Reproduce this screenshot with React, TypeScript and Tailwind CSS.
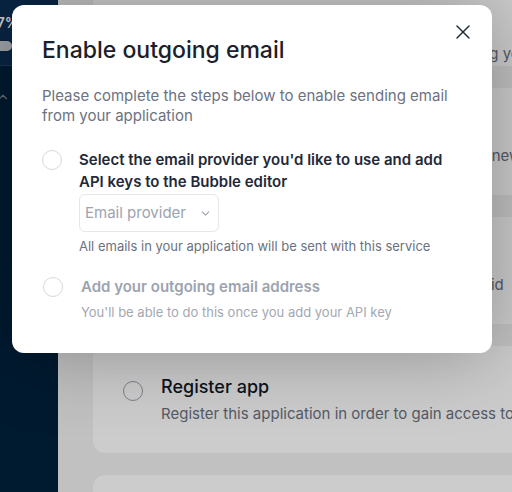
import { ChevronDown, ChevronUp, X } from "lucide-react";

type BgStep = {
  readonly title: string;
  readonly description: string;
};

const bgSteps: BgStep[] = [
  { title: "Create your account", description: "Set up the new workspace and start by building your app" },
  { title: "Choose a plan", description: "Pick a plan so your app can run under a brand new" },
  { title: "Connect a domain", description: "Point a custom domain to this app once it is paid" },
  { title: "Register app", description: "Register this application in order to gain access to" },
  { title: "Launch", description: "Go live" },
];

function BackgroundPage() {
  return (
    <div className="flex h-[492px] w-[512px] overflow-hidden bg-[#f2f2f2]">
      <aside className="flex w-[58px] shrink-0 flex-col bg-[#00213d]">
        <div className="flex h-[66px] flex-col gap-2 border-b border-white/10 bg-[#0b2f55] pt-3">
          <span className="-ml-3 text-[14px] font-semibold text-white">27%</span>
          <div className="-ml-3 h-[10px] w-[24px] rounded-full bg-[#c9ccd1]" />
        </div>
        <ChevronUp aria-hidden="true" size={14} className="-ml-1 mt-[24px] text-white/50" />
      </aside>
      <main className="flex flex-1 flex-col pl-[35px]">
        <div className="-mt-[42px] flex flex-col gap-[22px]">
          {bgSteps.map((step, i) => (
            <div
              key={step.title}
              className={`flex shrink-0 gap-[18px] rounded-xl bg-white px-[30px] w-[500px] ${i === 0 ? "h-[108px] pt-[56px]" : "h-[107px] pt-[28px]"}`}
            >
              <span className="mt-[7px] size-[20px] shrink-0 rounded-full border-[1.5px] border-[#9ca3af]" />
              <div className="flex flex-col">
                <p className="whitespace-nowrap text-[18px] font-medium leading-[26px] text-[#111827]">{step.title}</p>
                <p className="whitespace-nowrap text-[15px] leading-[27px] text-[#6b7280]">{step.description}</p>
              </div>
            </div>
          ))}
        </div>
      </main>
    </div>
  );
}

export default function App() {
  return (
    <div className="relative h-[492px] w-[512px] overflow-hidden font-['Inter',sans-serif]">
      <BackgroundPage />
      <div className="absolute inset-0 bg-black/20" />
      <section
        aria-label="Enable outgoing email"
        className="absolute left-[12px] top-[5px] w-[480px] rounded-xl bg-white px-[30px] pb-[32px] pt-[31px] shadow-[0_0_80px_rgba(0,0,0,0.3)]"
      >
        <button type="button" aria-label="Close" className="absolute right-[17px] top-[15px] text-[#1f2937]">
          <X aria-hidden="true" size={24} strokeWidth={1.4} />
        </button>
        <h2 className="text-[23px] font-medium leading-[28px] text-[#1a202c]">Enable outgoing email</h2>
        <p className="mt-[22px] text-[15px] leading-[20px] text-[#6b7280]">
          Please complete the steps below to enable sending email from your application
        </p>
        <div className="mt-[23px] flex gap-[17px]">
          <span className="mt-[1px] size-[20px] shrink-0 rounded-full border-[1.5px] border-[#d5d8dd]" />
          <div className="flex flex-col">
            <p className="text-[15px] font-semibold leading-[22px] text-[#1f2937]">
              Select the email provider you'd like to use and add API keys to the Bubble editor
            </p>
            <div className="mt-[1px] flex h-[38px] w-[140px] items-center justify-between rounded-md border border-[#e5e7eb] pl-[5px] pr-[6px]">
              <span className="text-[15px] text-[#9ca3af]">Email provider</span>
              <ChevronDown aria-hidden="true" size={13} strokeWidth={2} className="text-[#9ca3af]" />
            </div>
            <p className="mt-[5px] text-[13px] leading-[18px] text-[#6b7280]">All emails in your application will be sent with this service</p>
          </div>
        </div>
        <div className="mt-[21px] flex gap-[18px] pl-[1px]">
          <span className="mt-[1px] size-[20px] shrink-0 rounded-full border-[1.5px] border-[#d5d8dd]" />
          <div className="flex flex-col">
            <p className="text-[15px] font-semibold leading-[22px] text-[#9ca3af]">Add your outgoing email address</p>
            <p className="mt-[5px] text-[13px] leading-[18px] text-[#a3a8b2]">You'll be able to do this once you add your API key</p>
          </div>
        </div>
      </section>
    </div>
  );
}
